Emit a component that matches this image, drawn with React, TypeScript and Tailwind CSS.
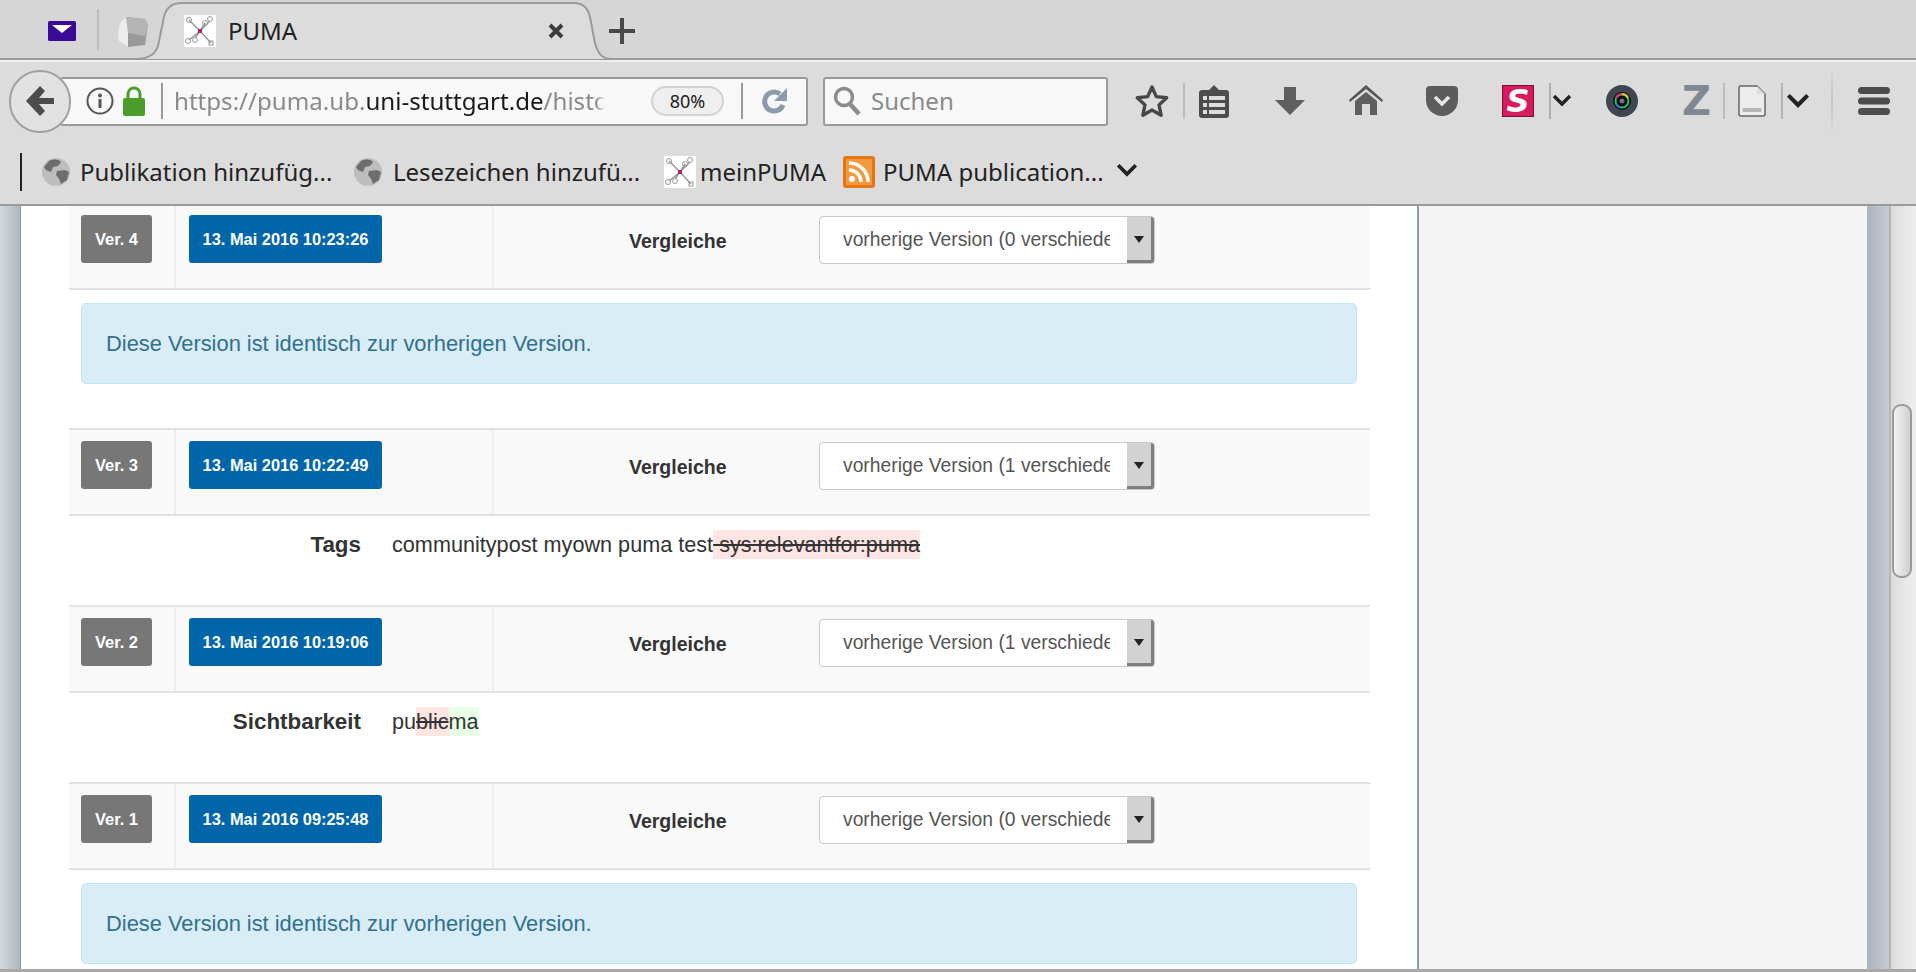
const rows = [
  { ver: "Ver. 4", date: "13. Mai 2016 10:23:26", diffs: "vorherige Version (0 verschieden)" },
  { ver: "Ver. 3", date: "13. Mai 2016 10:22:49", diffs: "vorherige Version (1 verschieden)" },
  { ver: "Ver. 2", date: "13. Mai 2016 10:19:06", diffs: "vorherige Version (1 verschieden)" },
  { ver: "Ver. 1", date: "13. Mai 2016 09:25:48", diffs: "vorherige Version (0 verschieden)" },
];

export default function App() {
  return (
    <div className="relative flex h-screen w-full flex-col overflow-hidden bg-white font-['Liberation_Sans',sans-serif]">
      <TabStrip />
      <NavBar />
      <div className="relative flex min-h-0 flex-1">
        <div className="w-[21px] shrink-0 border-r border-[#8b9bab] bg-gradient-to-r from-[#d3d8dc] to-[#aeb8c2]" />
        <Content />
        <aside className="w-[450px] shrink-0 border-l-2 border-[#8a9db0] bg-[#f4f4f4]" />
        <div className="w-[22px] shrink-0 bg-gradient-to-r from-[#a9b5c0] to-[#c6cbd1]" />
        <div className="relative flex-1 border-l-2 border-[#b5b5b5] bg-gradient-to-r from-[#dcdcdc] to-[#efefef]">
          <div className="absolute left-[1px] top-[198px] h-[174px] w-[20px] rounded-[9px] border-2 border-[#9a9a9a] bg-gradient-to-r from-[#f2f2f2] to-[#d0d0d0]" />
        </div>
      </div>
      <div className="h-[3px] shrink-0 bg-[#a8a8a8]" />
    </div>
  );
}

function TabStrip() {
  return (
    <div className="relative flex h-[60px] shrink-0 items-center border-b-2 border-[#9a9a9a] bg-[#d6d6d6] pt-[4px]">
      <svg className="absolute left-[136px] top-0" width="480" height="60" viewBox="0 0 480 60" fill="none" aria-hidden="true">
        <path d="M0 59C12 59 19 55 22 46L28 17C30 8 36 3 46 3H438C447 3 452 8 454 17L459 43C462 54 466 59 476 59" fill="#dcdcdc" stroke="#9a9a9a" strokeWidth="2" />
      </svg>

      <svg className="relative ml-[48px]" width="28" height="20" viewBox="0 0 28 20" aria-hidden="true">
        <rect width="28" height="20" rx="1.5" fill="#3a0a96" />
        <path d="M4 4h20l-10 8z" fill="#fff" />
      </svg>
      <div className="relative ml-[21px] h-[41px] w-[2px] -translate-y-[2px] bg-[#bcbcbc]" />
      <svg className="relative ml-[19px]" width="30" height="32" viewBox="0 0 30 32" aria-hidden="true">
        <path d="M8 2L27 4l3 6-3 20-17 2L4 24z" fill="#9a9a9a" />
        <path d="M8 2L27 4l3 6-3 11-17-3z" fill="#b5b5b5" />
        <path d="M8 2l2 16v14L1 26C-1 18 0 8 8 2z" fill="#ececec" />
      </svg>
      <div className="relative ml-[36px]">
        <PumaIcon />
      </div>
      <span className="relative ml-[12px] font-['Noto_Sans',sans-serif] text-[24px] text-[#222]">PUMA</span>
      <svg className="relative ml-[250px]" width="18" height="18" viewBox="0 0 18 18" aria-hidden="true">
        <path d="M3 3l12 12M15 3L3 15" stroke="#3c3c3c" strokeWidth="4" />
      </svg>
      <svg className="relative ml-[44px]" width="26" height="26" viewBox="0 0 26 26" aria-hidden="true">
        <path d="M13 0v26M0 13h26" stroke="#484848" strokeWidth="4" />
      </svg>
    </div>
  );
}

function NavBar() {
  return (
    <div className="relative z-10 h-[146px] shrink-0 border-b-2 border-t-2 border-b-[#9a9a9a] border-t-[#efefef] bg-[#dcdcdc]">
      <div className="flex h-[76px] items-center pt-[2px]">
        <div className="relative z-10 ml-[9px] flex h-[63px] w-[62px] items-center justify-center rounded-full border-2 border-[#a0a0a0] bg-[#e2e2e2]">
          <svg width="30" height="32" viewBox="0 0 30 32" aria-hidden="true">
            <path d="M15 1l5 5-6 7h15v6H14l6 7-5 5L1 16z" fill="#4c4c4c" />
          </svg>
        </div>
        <div className="-ml-[11px] flex h-[49px] w-[748px] items-center rounded-[3px] border-2 border-[#9a9a9a] bg-[#f8f8f8] pl-[24px]">
          <svg width="28" height="28" viewBox="0 0 28 28" fill="none" aria-hidden="true">
            <circle cx="14" cy="14" r="12.5" stroke="#555" strokeWidth="2" />
            <circle cx="14" cy="8.5" r="2" fill="#555" />
            <path d="M14 12v9" stroke="#555" strokeWidth="3" />
          </svg>
          <svg className="ml-[9px]" width="22" height="30" viewBox="0 0 22 30" fill="none" aria-hidden="true">
            <path d="M5 13V8a6 6 0 0112 0v5" stroke="#4c9e2a" strokeWidth="3" />
            <rect y="12" width="22" height="18" rx="2" fill="#4c9e2a" />
          </svg>
          <div className="ml-[16px] h-[36px] w-[2px] bg-[#9a9a9a]" />
          <div className="ml-[11px] w-[431px] overflow-hidden whitespace-nowrap font-['Noto_Sans',sans-serif] text-[24.100px] text-[#8a8a8a] [mask-image:linear-gradient(to_right,black_98%,transparent)]">
            https://puma.ub.<span className="text-[#1a1a1a]">uni-stuttgart.de</span>/history/post
          </div>
          <div className="ml-[46px] flex h-[30px] w-[73px] items-center justify-center rounded-full border-2 border-[#d2d2d2] bg-[#efefef] font-['Noto_Sans',sans-serif] text-[18px] text-[#222]">
            80%
          </div>
          <div className="ml-[17px] h-[36px] w-[2px] bg-[#9a9a9a]" />
          <svg className="ml-[19px]" width="26" height="28" viewBox="0 0 26 28" fill="none" aria-hidden="true">
            <path d="M21 18a9.5 9.5 0 11-3-11" stroke="#8b9bab" strokeWidth="5" />
            <path d="M25 1v13H12z" fill="#8b9bab" />
          </svg>
        </div>
        <div className="ml-[15px] flex h-[49px] w-[285px] items-center rounded-[3px] border-2 border-[#9a9a9a] bg-[#f8f8f8] pl-[8px]">
          <svg width="28" height="30" viewBox="0 0 28 30" fill="none" aria-hidden="true">
            <circle cx="11" cy="11" r="8.5" stroke="#8c8c8c" strokeWidth="3.5" />
            <path d="M17 18l9 10" stroke="#8c8c8c" strokeWidth="4.5" />
          </svg>
          <span className="ml-[10px] font-['Noto_Sans',sans-serif] text-[24px] text-[#8a8a8a]">Suchen</span>
        </div>

        <svg className="ml-[27px]" width="34" height="34" viewBox="0 0 34 34" fill="none" aria-hidden="true">
          <path d="M17 3l4.3 9.6 10.4 1.2-7.7 7.1 2.1 10.3L17 26l-9.100 5.200 2.100-10.300-7.700-7.100 10.400-1.200z" stroke="#484848" strokeWidth="3.400" strokeLinejoin="round" />
        </svg>
        <div className="ml-[14px] h-[36px] w-[2px] bg-[#bcbcbc]" />
        <svg className="ml-[14px]" width="30" height="34" viewBox="0 0 30 34" aria-hidden="true">
          <path d="M3 6h7l5-5 5 5h7a3 3 0 013 3v22a3 3 0 01-3 3H3a3 3 0 01-3-3V9a3 3 0 013-3z" fill="#4d4d4d" />
          <path d="M4 12h4v4H4zM4 19h4v4H4zM4 26h4v4H4zM10 12h16v4H10zM10 19h16v4H10zM10 26h16v4H10z" fill="#dcdcdc" />
        </svg>
        <svg className="ml-[46px]" width="30" height="30" viewBox="0 0 30 30" aria-hidden="true">
          <path d="M9 1h12v13h9L15 29 0 14h9z" fill="#5f5f5f" />
        </svg>
        <svg className="ml-[44px]" width="34" height="32" viewBox="0 0 34 32" aria-hidden="true">
          <path d="M17 0L0 15l1 2L17 4l16 13 1-2z" fill="#555" />
          <path d="M17 7l11 9v14h-7V19h-8v11H6V16z" fill="#5f5f5f" />
        </svg>
        <svg className="ml-[43px]" width="32" height="30" viewBox="0 0 32 30" aria-hidden="true">
          <path d="M4 0h24a4 4 0 014 4v10a16 16 0 01-32 0V4a4 4 0 014-4z" fill="#5c5c5c" />
          <path d="M9 11l7 7 7-7" fill="none" stroke="#e6e6e6" strokeWidth="3.500" />
        </svg>
        <div className="ml-[44px] flex h-[32px] w-[32px] items-center justify-center bg-[#d81b5e] font-['DejaVu_Sans',sans-serif] text-[32px] font-bold italic leading-none text-white ring-1 ring-inset ring-[#7a0f36]">
          S
        </div>
        <div className="ml-[15px] h-[36px] w-[2px] bg-[#aeaeae]" />
        <Chevron className="ml-[1px]" width={20} />
        <svg className="ml-[34px]" width="32" height="32" viewBox="0 0 32 32" aria-hidden="true">
          <ellipse cx="16" cy="16" rx="16" ry="16" fill="#3f4650" />
          <circle cx="16" cy="16" r="9" fill="#0b0d10" />
          <circle cx="16" cy="16" r="6.500" fill="none" stroke="#2fbf5a" strokeWidth="2" />
          <path d="M10 13a6.500 6.500 0 016-4" fill="none" stroke="#e0307a" strokeWidth="2" />
          <path d="M16 9a6.500 6.500 0 016 4" fill="none" stroke="#e8c52e" strokeWidth="2" />
          <path d="M10 19a6.500 6.500 0 004 3.500" fill="none" stroke="#3a6fe0" strokeWidth="2" />
          <circle cx="16" cy="16" r="2.500" fill="#6f7680" />
        </svg>
        <div className="ml-[44px] w-[26px] text-center font-['DejaVu_Sans',sans-serif] text-[40px] font-bold leading-[32px] text-[#7f8891]">Z</div>
        <div className="ml-[15px] h-[36px] w-[2px] bg-[#bcbcbc]" />
        <svg className="ml-[13px]" width="28" height="32" viewBox="0 0 28 32" aria-hidden="true">
          <path d="M2 1h17l8 8v20a2 2 0 01-2 2H3a2 2 0 01-2-2V2z" fill="#ececec" stroke="#666" strokeWidth="1.500" />
          <path d="M19 1v8h8z" fill="#dcdcdc" />
          <rect x="4.500" y="23" width="19" height="4" fill="#b5b5b5" />
        </svg>
        <div className="ml-[15px] h-[36px] w-[2px] bg-[#b5b5b5]" />
        <Chevron className="ml-[3px]" width={24} />
        <div className="ml-[21px] h-[70px] w-[2px] bg-gradient-to-b from-transparent via-[#c4c4c4] to-transparent" />
        <svg className="ml-[25px]" width="32" height="28" viewBox="0 0 32 28" aria-hidden="true">
          <rect width="32" height="7" rx="3.500" fill="#4d4d4d" />
          <rect y="10.500" width="32" height="7" rx="3.500" fill="#4d4d4d" />
          <rect y="21" width="32" height="7" rx="3.500" fill="#4d4d4d" />
        </svg>
      </div>

      <div className="flex h-[66px] items-center pt-[2px] font-['Noto_Sans',sans-serif] text-[24px] text-[#222]">
        <div className="ml-[20px] h-[38px] w-[2px] bg-[#222]" />
        <Globe className="ml-[20px]" />
        <span className="ml-[10px] w-[261px] whitespace-nowrap">Publikation hinzufüg...</span>
        <Globe className="ml-[13px]" />
        <span className="ml-[11px] w-[258px] whitespace-nowrap">Lesezeichen hinzufü...</span>
        <div className="ml-[13px]">
          <PumaIcon />
        </div>
        <span className="ml-[4px] w-[127px] whitespace-nowrap">meinPUMA</span>
        <svg className="ml-[16px]" width="32" height="32" viewBox="0 0 32 32" aria-hidden="true">
          <rect width="32" height="32" rx="3" fill="#e8760f" />
          <rect x="3" y="3" width="26" height="26" rx="1" fill="#f29a3d" />
          <circle cx="9" cy="23" r="3" fill="#fff" />
          <path d="M6 14a12 12 0 0112 12M6 7a19 19 0 0119 19" fill="none" stroke="#fff" strokeWidth="3.500" />
        </svg>
        <span className="ml-[8px] w-[226px] whitespace-nowrap">PUMA publication...</span>
        <Chevron className="ml-[7px] -translate-y-[1px]" width={22} />
      </div>
    </div>
  );
}

function Content() {
  return (
    <main className="-mt-[4px] w-[1396px] shrink-0 pl-[48px] pr-[47px] text-[21.650px] text-[#333]">
      <VersionRow row={rows[0]} />
      <Identical />
      <VersionRow row={rows[1]} />
      <DiffRow label="Tags">
        communitypost myown puma test
        <del className="inline-block bg-[#ffe4e4]"> sys:relevantfor:puma</del>
      </DiffRow>
      <VersionRow row={rows[2]} />
      <DiffRow label="Sichtbarkeit">
        pu<del className="inline-block bg-[#ffe4e4]">blic</del>
        <ins className="inline-block bg-[#e6ffe6] no-underline">ma</ins>
      </DiffRow>
      <VersionRow row={rows[3]} />
      <Identical />
    </main>
  );
}

function VersionRow({ row }: { row: (typeof rows)[number] }) {
  return (
    <div className="flex h-[88px] border-y-2 border-[#e2e2e2] bg-[#f9f9f9]">
      <div className="w-[107px] border-r-2 border-[#eeeeee] pl-[12px] pt-[11px]">
        <div className="flex h-[48px] w-[71px] items-center justify-center rounded-[3px] bg-[#777777] text-[16.500px] font-bold text-white">
          {row.ver}
        </div>
      </div>
      <div className="w-[318px] border-r-2 border-[#eeeeee] pl-[13px] pt-[11px]">
        <div className="flex h-[48px] w-[193px] items-center justify-center rounded-[3px] bg-[#0066a9] text-[16.400px] font-bold text-white">
          {row.date}
        </div>
      </div>
      <div className="flex flex-1 items-start pt-[12px]">
        <span className="ml-[135px] w-[98px] whitespace-nowrap pt-[11px] text-[19.500px] font-bold text-[#333]">Vergleiche</span>
        <div className="ml-[92px] flex h-[48px] w-[336px] items-stretch overflow-hidden rounded-[4px] border border-[#c8c8c8] bg-white">
          <div className="flex flex-1 items-center pl-[23px]">
            <span className="w-[267px] overflow-hidden whitespace-nowrap text-[19.300px] text-[#555]">
              {row.diffs}
            </span>
          </div>
          <div className="flex w-[27px] items-center justify-center border-b-[3px] border-r-[3px] border-[#7f7f7f] bg-[#d2d2d2]">
            <svg width="10" height="8" viewBox="0 0 10 8" aria-hidden="true">
              <path d="M0 1h10L5 8z" fill="#222" />
            </svg>
          </div>
        </div>
      </div>
    </div>
  );
}

function Identical() {
  return (
    <div className="mb-[44px] ml-[12px] mr-[13px] mt-[13px] flex h-[81px] items-center rounded-[5px] border border-[#bce8f1] bg-[#d9edf7] pl-[24px] pt-[1px] text-[21.850px] text-[#31708f]">
      Diese Version ist identisch zur vorherigen Version.
    </div>
  );
}

function DiffRow({ label, children }: { label: string; children: React.ReactNode }) {
  return (
    <div className="flex h-[89px] items-start pt-[14px] leading-[29px]">
      <div className="w-[292px] text-right text-[22.400px] font-bold">{label}</div>
      <div className="ml-[31px] whitespace-pre">{children}</div>
    </div>
  );
}

function Chevron({ className, width }: { className: string; width: number }) {
  return (
    <svg className={className} width={width} height={width * 0.7} viewBox="0 0 20 14" fill="none" aria-hidden="true">
      <path d="M2 2l8 8 8-8" stroke="#222" strokeWidth="3.400" />
    </svg>
  );
}

function Globe({ className }: { className: string }) {
  return (
    <svg className={className} width="28" height="28" viewBox="0 0 28 28" aria-hidden="true">
      <circle cx="14" cy="14" r="14" fill="#bdbdbd" />
      <path d="M7 3c5-2 10-2 12 1l-3 4-5 1-2 5-5-2-2-3zM15 13l8-1 4 2-2 8-6 4-2-5-3-4z" fill="#6d6d6d" />
    </svg>
  );
}

function PumaIcon() {
  return (
    <svg width="32" height="32" viewBox="0 0 32 32" fill="none" aria-hidden="true">
      <rect width="32" height="32" fill="#fff" />
      <path d="M5 5l11 11 11 12M26 6L16 16 5 25M16 16l5-8M16 16l-5 7M16 16l-8-8" stroke="#9a9a9a" strokeWidth="1.500" />
      <circle cx="5" cy="5" r="2.500" stroke="#9a9a9a" />
      <circle cx="26" cy="4" r="2.500" stroke="#9a9a9a" />
      <circle cx="21" cy="8" r="2.500" stroke="#9a9a9a" />
      <circle cx="4" cy="26" r="2.500" stroke="#9a9a9a" />
      <circle cx="11" cy="25" r="2.500" stroke="#9a9a9a" />
      <rect x="25" y="26" width="4" height="4" stroke="#9a9a9a" />
      <rect x="14" y="14" width="4" height="4" fill="#b3206b" />
    </svg>
  );
}
